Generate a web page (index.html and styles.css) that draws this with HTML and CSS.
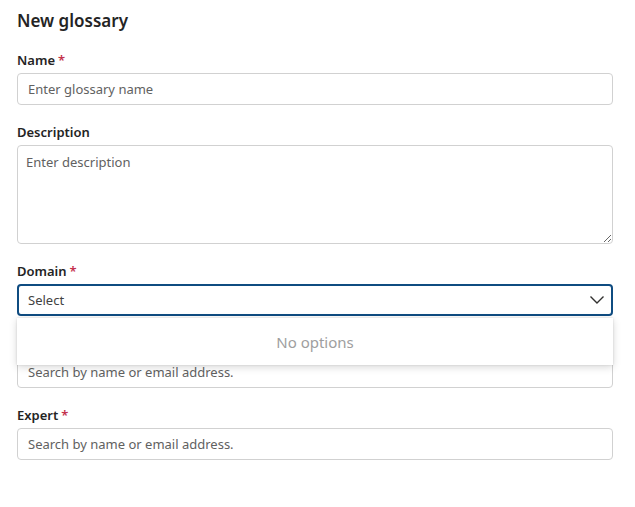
FILE: index.html
```html
<!DOCTYPE html>
<html lang="en">

<head>
    <meta charset="UTF-8">
    <meta name="viewport" content="width=device-width, initial-scale=1.0">
    <title>New glossary</title>
    <link rel="stylesheet" href="styles.css">
</head>

<body>
    <form class="panel">
        <h1 class="title">New glossary</h1>

        <div class="field">
            <label class="label">Name<span class="req">*</span></label>
            <input class="input" type="text" placeholder="Enter glossary name">
        </div>

        <div class="field">
            <label class="label">Description</label>
            <textarea class="input area" placeholder="Enter description"></textarea>
        </div>

        <div class="field">
            <label class="label">Domain<span class="req">*</span></label>
            <div class="select-wrap">
                <div class="select">
                    <span>Select</span>
                    <svg class="chevron" width="16" height="10" viewBox="0 0 16 10">
                        <path d="M1.5 1.5 L8 8 L14.5 1.5" fill="none" stroke="#323130" stroke-width="1.4" />
                    </svg>
                </div>
                <div class="menu">No options</div>
            </div>
        </div>

        <div class="field">
            <label class="label">Owner<span class="req">*</span></label>
            <input class="input" type="text" placeholder="Search by name or email address.">
        </div>

        <div class="field">
            <label class="label">Expert<span class="req">*</span></label>
            <input class="input" type="text" placeholder="Search by name or email address.">
        </div>
    </form>
</body>

</html>
```

FILE: styles.css
```css
body {
    margin: 0;
    background: #fff;
    font-family: "Noto Sans", "Open Sans", sans-serif;
    color: #242424;
}

.panel {
    padding: 9px 22px 0 17px;
}

.title {
    margin: 0 0 17px;
    font-size: 17px;
    line-height: 24px;
    font-weight: 600;
}

.field {
    display: flex;
    flex-direction: column;
    margin-bottom: 17px;
}

.label {
    font-size: 13px;
    line-height: 20px;
    font-weight: 600;
    margin-bottom: 3px;
}

.req {
    color: #c4314b;
    margin-left: 3px;
}

.input {
    box-sizing: border-box;
    height: 32px;
    width: 100%;
    border: 1px solid #d1d1d1;
    border-radius: 4px;
    padding: 0 10px;
    font-family: inherit;
    font-size: 13px;
    color: #242424;
    outline: none;
}

.input::placeholder {
    color: #616161;
}

.area {
    height: 99px;
    padding: 7px 8px;
    resize: vertical;
}

.select-wrap {
    position: relative;
}

.select {
    box-sizing: border-box;
    height: 32px;
    border: 2px solid #0f4c81;
    border-radius: 4px;
    padding: 0 6px 0 9px;
    display: flex;
    align-items: center;
    justify-content: space-between;
    font-size: 13px;
    color: #424242;
}

.menu {
    position: absolute;
    top: 34px;
    left: 0;
    right: 0;
    height: 47px;
    background: #fff;
    box-shadow: 0 2px 8px rgba(0, 0, 0, 0.16), 0 0 2px rgba(0, 0, 0, 0.12);
    display: flex;
    align-items: center;
    justify-content: center;
    font-size: 15px;
    color: #9e9e9e;
    z-index: 2;
}
```
